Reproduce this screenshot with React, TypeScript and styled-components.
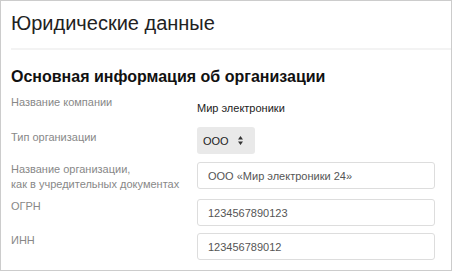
import React from "react";
import styled, { createGlobalStyle } from "styled-components";

const GlobalStyle = createGlobalStyle`
    html, body {
        margin: 0;
        padding: 0;
        background: #ffffff;
    }
    body {
        font-family: "Liberation Sans", Arial, sans-serif;
        color: #222222;
    }
`;

const Frame = styled.div`
    box-sizing: border-box;
    width: 452px;
    height: 271px;
    border: 1px solid #cccccc;
    background: #ffffff;
    overflow: hidden;
`;

const Header = styled.div`
    box-sizing: border-box;
    height: 47px;
    padding: 10px 0 0 10px;
`;

const PageTitle = styled.h1`
    margin: 0;
    font-size: 20px;
    line-height: 24px;
    font-weight: normal;
    color: #222222;
`;

const Divider = styled.div`
    height: 2px;
    margin-left: 10px;
    background: #f3f3f3;
`;

const Section = styled.div`
    padding: 0 17px 0 10px;
`;

const SectionTitle = styled.h2`
    margin: 17px 0 0;
    font-size: 16px;
    line-height: 20px;
    font-weight: bold;
    color: #111111;
`;

const Row = styled.div<{ $top: number }>`
    display: grid;
    grid-template-columns: 186px 1fr;
    align-items: start;
    margin-top: ${p => p.$top}px;
`;

const Label = styled.div<{ $pad?: number }>`
    padding-top: ${p => p.$pad ?? 0}px;
    font-size: 11px;
    line-height: 15px;
    color: #888888;
`;

const Value = styled.div`
    padding-top: 6px;
    font-size: 11px;
    line-height: 15px;
    color: #222222;
`;

const Select = styled.div`
    box-sizing: border-box;
    display: flex;
    align-items: center;
    gap: 9px;
    height: 27px;
    padding: 0 0 0 6px;
    width: 58px;
    border-radius: 3px;
    background: #e9e9e9;
    font-size: 11px;
    color: #222222;
`;

const Arrows = styled.svg`
    width: 5px;
    height: 9px;
`;

const Input = styled.input`
    box-sizing: border-box;
    display: block;
    width: 238px;
    height: 27px;
    margin: 0;
    padding: 0 10px;
    border: 1px solid #dddddd;
    border-radius: 3px;
    background: #ffffff;
    font-family: "Liberation Sans", Arial, sans-serif;
    font-size: 11px;
    color: #555555;
    outline: none;
`;

export default function App() {
    return (
        <>
            <GlobalStyle />
            <Frame>
                <Header>
                    <PageTitle>Юридические данные</PageTitle>
                </Header>
                <Divider />
                <Section>
                    <SectionTitle>Основная информация об организации</SectionTitle>
                    <Row $top={8}>
                        <Label>Название компании</Label>
                        <Value>Мир электроники</Value>
                    </Row>
                    <Row $top={11}>
                        <Label $pad={3}>Тип организации</Label>
                        <Select>
                            ООО
                            <Arrows viewBox="0 0 5 9">
                                <path d="M2.5 0 L5 3.5 H0 Z M2.5 9 L5 5.5 H0 Z" fill="#333333" />
                            </Arrows>
                        </Select>
                    </Row>
                    <Row $top={8}>
                        <Label>
                            Название организации,
                            <br />
                            как в учредительных документах
                        </Label>
                        <Input defaultValue="ООО «Мир электроники 24»" />
                    </Row>
                    <Row $top={7}>
                        <Label>ОГРН</Label>
                        <Input defaultValue="1234567890123" />
                    </Row>
                    <Row $top={7}>
                        <Label>ИНН</Label>
                        <Input defaultValue="123456789012" />
                    </Row>
                </Section>
            </Frame>
        </>
    );
}
